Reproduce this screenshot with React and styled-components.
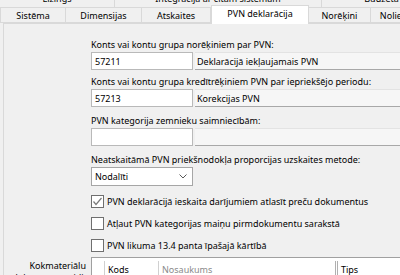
import React from "react";
import styled, { createGlobalStyle } from "styled-components";

const Global = createGlobalStyle`
  html, body { margin: 0; padding: 0; }
  body {
    width: 400px; height: 275px; overflow: hidden;
    background: #f0f0f0;
    font-family: "Noto Sans", "Open Sans", sans-serif;
    font-size: 9px; color: #000;
  }
`;

const Window = styled.div`
  width: 400px; height: 275px; overflow: hidden;
  background: #f0f0f0;
  display: flex; flex-direction: column;
`;

const TopRow = styled.div`
  display: flex; height: 7px; overflow: hidden; flex: none;
  width: 600px;
`;

const TopTab = styled.div`
  flex: none; width: ${p => p.$w}px; height: 7px;
  border-right: 1px solid #d9d9d9;
  box-sizing: border-box;
  display: flex; justify-content: center; align-items: flex-end;
  line-height: 14px; white-space: nowrap;
  & > span { margin-bottom: 1px; }
`;

const TabRow = styled.div`
  display: flex; height: 16px; flex: none; width: 600px;
  align-items: flex-start;
`;

const Tab = styled.div`
  flex: none; box-sizing: border-box;
  width: ${p => p.$w}px;
  height: ${p => (p.$active ? 19 : 16)}px;
  margin-top: ${p => (p.$active ? -2 : 0)}px;
  background: ${p => (p.$active ? "#ffffff" : "#f0f0f0")};
  border: 1px solid #d9d9d9;
  border-bottom: ${p => (p.$active ? "none" : "1px solid #d9d9d9")};
  border-left: ${p => (p.$first || p.$active ? "1px solid #d9d9d9" : "none")};
  position: relative; z-index: ${p => (p.$active ? 2 : 1)};
  display: flex; justify-content: center;
  padding-top: 1px;
  line-height: 14px; white-space: nowrap;
`;

const Panel = styled.div`
  flex: 1; margin-left: 3px; width: 600px;
  border-left: 1px solid #d9d9d9;
  border-top: 1px solid #d9d9d9;
  background: #f0f0f0;
  display: flex; flex-direction: column;
`;

const Form = styled.div`
  margin-left: 87px; display: flex; flex-direction: column;
`;

const Block = styled.div`
  margin-top: ${p => p.$mt}px;
  display: flex; flex-direction: column;
`;

const Label = styled.div`
  height: 15px; line-height: 15px; white-space: nowrap;
`;

const FieldRow = styled.div`
  display: flex; gap: 2px; height: 18px;
`;

const Input = styled.div`
  box-sizing: border-box; width: 102px; height: 18px;
  background: #fff; border: 1px solid #b9b9b9;
  padding-left: 3px; line-height: 17px;
`;

const ReadOnly = styled.div`
  box-sizing: border-box; width: 300px; height: 18px;
  background: #f6f6f6;
  border-top: 1px solid #e3e3e3;
  border-bottom: 1px solid #a8a8a8;
  padding-left: 2px; line-height: 17px; white-space: nowrap;
`;

const Select = styled.div`
  box-sizing: border-box; width: 102px; height: 19px;
  background: #fff; border: 1px solid #a6a6a6;
  padding: 0 5px 0 3px;
  display: flex; align-items: center; justify-content: space-between;
`;

const Checks = styled.div`
  margin-top: 4px; display: flex; flex-direction: column;
`;

const CheckRow = styled.div`
  height: 22px; display: flex; align-items: center; gap: 3px;
  white-space: nowrap;
`;

const Box = styled.div`
  box-sizing: border-box; width: 13px; height: 13px; flex: none;
  background: #fff; border: 1px solid #6f6f6f;
  display: flex; align-items: center; justify-content: center;
`;

const Bottom = styled.div`
  margin-top: 1px; display: flex;
`;

const SideLabel = styled.div`
  width: 82px; margin-right: 5px; text-align: right;
  line-height: 12px; padding-top: 3px; white-space: nowrap;
`;

const Grid = styled.div`
  border-top: 1px solid #a0a0a0;
  border-left: 1px solid #a0a0a0;
  background: #fff;
  display: flex; height: 30px; padding-top: 3px;
`;

const HeadCell = styled.div`
  box-sizing: border-box; width: ${p => p.$w}px; flex: none;
  border-right: ${p => (p.$double ? "3px double #b0b0b0" : "1px solid #d0d0d0")};
  padding: 2px 0 0 ${p => (p.$pad ? 3 : 0)}px;
  color: ${p => (p.$dim ? "#8a8a8a" : "#000")};
  line-height: 14px; white-space: nowrap;
  height: 30px;
`;

const Chevron = () => (
  <svg width="8" height="5" viewBox="0 0 8 5">
    <path d="M0.5 0.5 L4 4 L7.5 0.5" fill="none" stroke="#5a5a5a" strokeWidth="1" />
  </svg>
);

const Tick = () => (
  <svg width="11" height="11" viewBox="0 0 11 11">
    <path d="M1.5 5.5 L4 8.5 L9.5 2" fill="none" stroke="#7a7a7a" strokeWidth="1.2" />
  </svg>
);

const Check = ({ checked, children }) => (
  <CheckRow>
    <Box>{checked && <Tick />}</Box>
    <span>{children}</span>
  </CheckRow>
);

export default function App() {
  return (
    <Window>
      <Global />
      <TopRow>
        <TopTab $w={115}><span>Līzings</span></TopTab>
        <TopTab $w={207}><span>Integrācija ar citām sistēmām</span></TopTab>
        <TopTab $w={120}><span>Budžeta</span></TopTab>
      </TopRow>
      <TabRow>
        <Tab $w={66} $first>Sistēma</Tab>
        <Tab $w={76}>Dimensijas</Tab>
        <Tab $w={69}>Atskaites</Tab>
        <Tab $w={98} $active>PVN deklarācija</Tab>
        <Tab $w={62}>Norēķini</Tab>
        <Tab $w={70}>Nolietojums</Tab>
      </TabRow>
      <Panel>
        <Form>
          <Block $mt={13}>
            <Label>Konts vai kontu grupa norēķiniem par PVN:</Label>
            <FieldRow>
              <Input>57211</Input>
              <ReadOnly>Deklarācijā iekļaujamais PVN</ReadOnly>
            </FieldRow>
          </Block>
          <Block $mt={4}>
            <Label>Konts vai kontu grupa kredītrēķiniem PVN par iepriekšējo periodu:</Label>
            <FieldRow>
              <Input>57213</Input>
              <ReadOnly>Korekcijas PVN</ReadOnly>
            </FieldRow>
          </Block>
          <Block $mt={6}>
            <Label>PVN kategorija zemnieku saimniecībām:</Label>
            <FieldRow>
              <Input />
              <ReadOnly />
            </FieldRow>
          </Block>
          <Block $mt={6}>
            <Label>Neatskaitāmā PVN priekšnodokļa proporcijas uzskaites metode:</Label>
            <Select>
              <span>Nodalīti</span>
              <Chevron />
            </Select>
          </Block>
          <Checks>
            <Check checked>PVN deklarācijā ieskaita darījumiem atlasīt preču dokumentus</Check>
            <Check>Atļaut PVN kategorijas maiņu pirmdokumentu sarakstā</Check>
            <Check>PVN likuma 13.4 panta īpašajā kārtībā</Check>
          </Checks>
        </Form>
        <Bottom>
          <SideLabel>Kokmateriālu<br />dokumentu veidi:</SideLabel>
          <Grid>
            <HeadCell $w={13} />
            <HeadCell $w={54} $pad>Kods</HeadCell>
            <HeadCell $w={179} $pad $dim $double>Nosaukums</HeadCell>
            <HeadCell $w={120} $pad>Tips</HeadCell>
          </Grid>
        </Bottom>
      </Panel>
    </Window>
  );
}
